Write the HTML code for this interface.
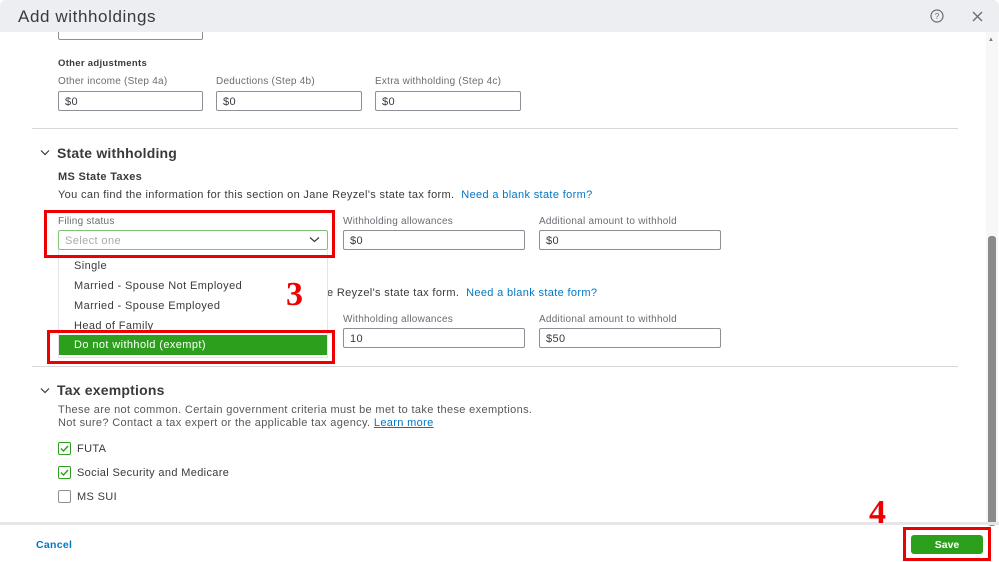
<!DOCTYPE html>
<html><head><meta charset="utf-8"><style>
*{box-sizing:border-box;margin:0;padding:0}
body{width:999px;height:562px;overflow:hidden;background:#fff;font-family:"Liberation Sans",sans-serif;color:#393a3d;position:relative}
.a{position:absolute;white-space:nowrap}
.hdr{left:0;top:0;width:999px;height:32px;background:#eceef1;border-radius:6px 6px 0 0}
.lbl{font-size:10px;letter-spacing:0.25px;color:#6b6c72}
.inp{height:20px;border:1px solid #8d9096;border-radius:2px;font-size:11px;letter-spacing:0.4px;padding:4px 6px 0;color:#393a3d;background:#fff}
.sec{font-size:14px;font-weight:bold;color:#393a3d;letter-spacing:0.2px}
.txt{font-size:11px;letter-spacing:0.35px;color:#393a3d}
.lnk{color:#0077c5}
.div{height:1px;background:#d4d7dc}
.red{border:3px solid #e00}
.cb{width:13px;height:13px;border:1px solid #8d9096;border-radius:2px;background:#fff}
.cb.on{border-color:#2ca01c}
.opt{font-size:11px;letter-spacing:0.4px;color:#393a3d;left:74px}
</style></head><body>
<div class="a inp" style="left:58px;top:20px;width:145px;height:20px"></div>
<div class="a hdr"></div>
<div class="a" style="left:18px;top:7px;font-size:17px;letter-spacing:0.6px;color:#393a3d">Add withholdings</div>
<svg class="a" style="left:930px;top:9px" width="14" height="14" viewBox="0 0 14 14"><circle cx="7" cy="7" r="6" fill="none" stroke="#6b6c72" stroke-width="1.2"/><text x="7" y="10" font-size="8" text-anchor="middle" fill="#6b6c72" font-family="Liberation Sans">?</text></svg>
<svg class="a" style="left:972px;top:11px" width="11" height="11" viewBox="0 0 11 11"><path d="M1 1L10 10M10 1L1 10" stroke="#6b6c72" stroke-width="1.3"/></svg>
<div class="a" style="left:986px;top:32px;width:12px;height:490px;background:#f7f7f7"></div>
<div class="a" style="left:988px;top:236px;width:8px;height:290px;background:#8a8a8a;border-radius:3px"></div>
<div class="a" style="left:988px;top:37px;font-size:6px;color:#777">▲</div>

<div class="a txt" style="left:58px;top:58px;font-size:9.5px;font-weight:bold;letter-spacing:0.3px">Other adjustments</div>
<div class="a lbl" style="left:58px;top:76px">Other income (Step 4a)</div>
<div class="a lbl" style="left:216px;top:76px">Deductions (Step 4b)</div>
<div class="a lbl" style="left:375px;top:76px">Extra withholding (Step 4c)</div>
<div class="a inp" style="left:58px;top:91px;width:145px">$0</div>
<div class="a inp" style="left:216px;top:91px;width:146px">$0</div>
<div class="a inp" style="left:375px;top:91px;width:146px">$0</div>
<div class="a div" style="left:32px;top:128px;width:926px"></div>

<svg class="a" style="left:40px;top:149px" width="10" height="7" viewBox="0 0 10 7"><path d="M1 1.5L5 5.5L9 1.5" fill="none" stroke="#393a3d" stroke-width="1.2"/></svg>
<div class="a sec" style="left:57px;top:145px">State withholding</div>
<div class="a txt" style="left:58px;top:171px;font-weight:bold;letter-spacing:0.3px">MS State Taxes</div>
<div class="a txt" style="left:58px;top:189px">You can find the information for this section on Jane Reyzel's state tax form.&nbsp; <span class="lnk">Need a blank state form?</span></div>

<div class="a lbl" style="left:58px;top:216px">Filing status</div>
<div class="a inp" style="left:58px;top:230px;width:270px;border:1.5px solid #7fc476;color:#aaa">Select one</div>
<svg class="a" style="left:309px;top:236px" width="11" height="7" viewBox="0 0 11 7"><path d="M1 1.5L5.5 5.5L10 1.5" fill="none" stroke="#393a3d" stroke-width="1.2"/></svg>
<div class="a lbl" style="left:343px;top:216px">Withholding allowances</div>
<div class="a lbl" style="left:539px;top:216px">Additional amount to withhold</div>
<div class="a inp" style="left:343px;top:230px;width:182px">$0</div>
<div class="a inp" style="left:539px;top:230px;width:182px">$0</div>

<div class="a txt" style="left:327px;top:287px">e Reyzel's state tax form.&nbsp; <span class="lnk">Need a blank state form?</span></div>
<div class="a lbl" style="left:343px;top:314px">Withholding allowances</div>
<div class="a lbl" style="left:539px;top:314px">Additional amount to withhold</div>
<div class="a inp" style="left:343px;top:328px;width:182px">10</div>
<div class="a inp" style="left:539px;top:328px;width:182px">$50</div>

<div class="a" style="left:58px;top:250px;width:270px;height:108px;background:#fff;border:1px solid #e3e5e8;border-top:none"></div>
<div class="a opt" style="top:260px">Single</div>
<div class="a opt" style="top:280px">Married - Spouse Not Employed</div>
<div class="a opt" style="top:300px">Married - Spouse Employed</div>
<div class="a opt" style="top:320px">Head of Family</div>
<div class="a" style="left:59px;top:335px;width:268px;height:20px;background:#2ca01c;color:#fff;font-size:11px;letter-spacing:0.4px;padding:4px 15px 0">Do not withhold (exempt)</div>

<div class="a red" style="left:44px;top:210px;width:291px;height:48px"></div>
<div class="a red" style="left:47px;top:330px;width:288px;height:34px"></div>
<div class="a" style="left:286px;top:276px;font-family:'Liberation Serif',serif;font-weight:bold;font-size:34px;color:#e00">3</div>

<div class="a div" style="left:32px;top:366px;width:926px"></div>
<svg class="a" style="left:40px;top:387px" width="10" height="7" viewBox="0 0 10 7"><path d="M1 1.5L5 5.5L9 1.5" fill="none" stroke="#393a3d" stroke-width="1.2"/></svg>
<div class="a sec" style="left:57px;top:382px">Tax exemptions</div>
<div class="a txt" style="left:58px;top:404px;color:#55575c">These are not common. Certain government criteria must be met to take these exemptions.</div>
<div class="a txt" style="left:58px;top:417px;color:#55575c">Not sure? Contact a tax expert or the applicable tax agency. <span class="lnk" style="text-decoration:underline">Learn more</span></div>
<div class="a cb on" style="left:58px;top:442px"></div>
<svg class="a" style="left:60px;top:445px" width="9" height="7" viewBox="0 0 9 7"><path d="M1 3.5L3.5 6L8 1" fill="none" stroke="#2ca01c" stroke-width="1.4"/></svg>
<div class="a txt" style="left:77px;top:443px">FUTA</div>
<div class="a cb on" style="left:58px;top:466px"></div>
<svg class="a" style="left:60px;top:469px" width="9" height="7" viewBox="0 0 9 7"><path d="M1 3.5L3.5 6L8 1" fill="none" stroke="#2ca01c" stroke-width="1.4"/></svg>
<div class="a txt" style="left:77px;top:467px">Social Security and Medicare</div>
<div class="a cb" style="left:58px;top:490px"></div>
<div class="a txt" style="left:77px;top:491px">MS SUI</div>

<div class="a" style="left:0;top:522px;width:999px;height:3px;background:#e6e7ea"></div>
<div class="a" style="left:36px;top:539px;font-size:10.5px;letter-spacing:0.3px;font-weight:bold;color:#0077c5">Cancel</div>
<div class="a" style="left:869px;top:494px;font-family:'Liberation Serif',serif;font-weight:bold;font-size:34px;color:#e00">4</div>
<div class="a red" style="left:903px;top:527px;width:88px;height:34px"></div>
<div class="a" style="left:911px;top:535px;width:72px;height:19px;background:#2ca01c;border-radius:3px;color:#fff;font-size:10.5px;font-weight:bold;text-align:center;line-height:20px">Save</div>
</body></html>
